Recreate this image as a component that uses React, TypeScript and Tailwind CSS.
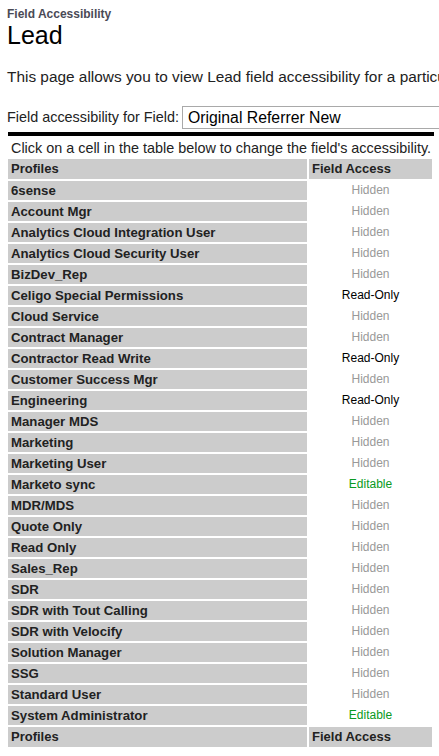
import React from 'react';

type Access = 'Hidden' | 'Read-Only' | 'Editable';

interface ProfileRow {
  name: string;
  access: Access;
}

const rows: ProfileRow[] = [
  { name: '6sense', access: 'Hidden' },
  { name: 'Account Mgr', access: 'Hidden' },
  { name: 'Analytics Cloud Integration User', access: 'Hidden' },
  { name: 'Analytics Cloud Security User', access: 'Hidden' },
  { name: 'BizDev_Rep', access: 'Hidden' },
  { name: 'Celigo Special Permissions', access: 'Read-Only' },
  { name: 'Cloud Service', access: 'Hidden' },
  { name: 'Contract Manager', access: 'Hidden' },
  { name: 'Contractor Read Write', access: 'Read-Only' },
  { name: 'Customer Success Mgr', access: 'Hidden' },
  { name: 'Engineering', access: 'Read-Only' },
  { name: 'Manager MDS', access: 'Hidden' },
  { name: 'Marketing', access: 'Hidden' },
  { name: 'Marketing User', access: 'Hidden' },
  { name: 'Marketo sync', access: 'Editable' },
  { name: 'MDR/MDS', access: 'Hidden' },
  { name: 'Quote Only', access: 'Hidden' },
  { name: 'Read Only', access: 'Hidden' },
  { name: 'Sales_Rep', access: 'Hidden' },
  { name: 'SDR', access: 'Hidden' },
  { name: 'SDR with Tout Calling', access: 'Hidden' },
  { name: 'SDR with Velocify', access: 'Hidden' },
  { name: 'Solution Manager', access: 'Hidden' },
  { name: 'SSG', access: 'Hidden' },
  { name: 'Standard User', access: 'Hidden' },
  { name: 'System Administrator', access: 'Editable' },
];

// colour per access level
const accessClass: Record<Access, string> = {
  Hidden: 'text-[#999999]',
  'Read-Only': 'text-black',
  Editable: 'text-[#0a9a22]',
};

const HeaderRow: React.FC = () => (
  <>
    <div className="h-[20px] bg-[#cccccc] pl-[3px] text-[13px] font-bold leading-[20px] text-[#222]">Profiles</div>
    <div className="h-[20px] bg-[#cccccc] pl-[3px] text-[13px] font-bold leading-[20px] text-[#222]">Field Access</div>
  </>
);

const App: React.FC = () => {
  return (
    <div className="w-full overflow-hidden whitespace-nowrap bg-white pl-[7px] pt-[7px] text-black" style={{ fontFamily: '"Liberation Sans", Arial, sans-serif' }}>
      <div className="text-[12px] font-bold leading-[14px] text-[#4a4a56]">Field Accessibility</div>
      <div className="text-[25px] leading-[28px]">Lead</div>

      <p className="mt-[19px] text-[15.4px] leading-[18px] text-[#222]">
        This page allows you to view Lead field accessibility for a particular field.
      </p>

      <div className="mt-[20px] flex items-center text-[14.4px] text-[#222]">
        <span className="mr-[3px]">Field accessibility for Field:</span>
        <div className="flex h-[23px] w-[400px] shrink-0 items-center border border-[#a9a9a9] pl-[5px] text-[15.8px] text-black">
          Original Referrer New
        </div>
      </div>

      <div className="ml-[1px] mt-[3px] h-[4px] w-[426px] bg-black" />

      <div className="ml-[4px] mt-[4px] text-[14.4px] leading-[16px] text-[#222]">
        Click on a cell in the table below to change the field's accessibility.
      </div>

      <div className="ml-[1px] mt-[3px] grid grid-cols-[299px_123px] gap-[2px] pb-[10px]">
        <HeaderRow />
        {rows.map((r) => (
          <React.Fragment key={r.name}>
            <div className="h-[19px] bg-[#cccccc] pl-[3px] text-[13.2px] font-bold leading-[19px] text-[#222]">{r.name}</div>
            <div className={`h-[19px] text-center text-[12px] leading-[19px] ${accessClass[r.access]}`}>{r.access}</div>
          </React.Fragment>
        ))}
        <HeaderRow />
      </div>
    </div>
  );
};

export default App;
